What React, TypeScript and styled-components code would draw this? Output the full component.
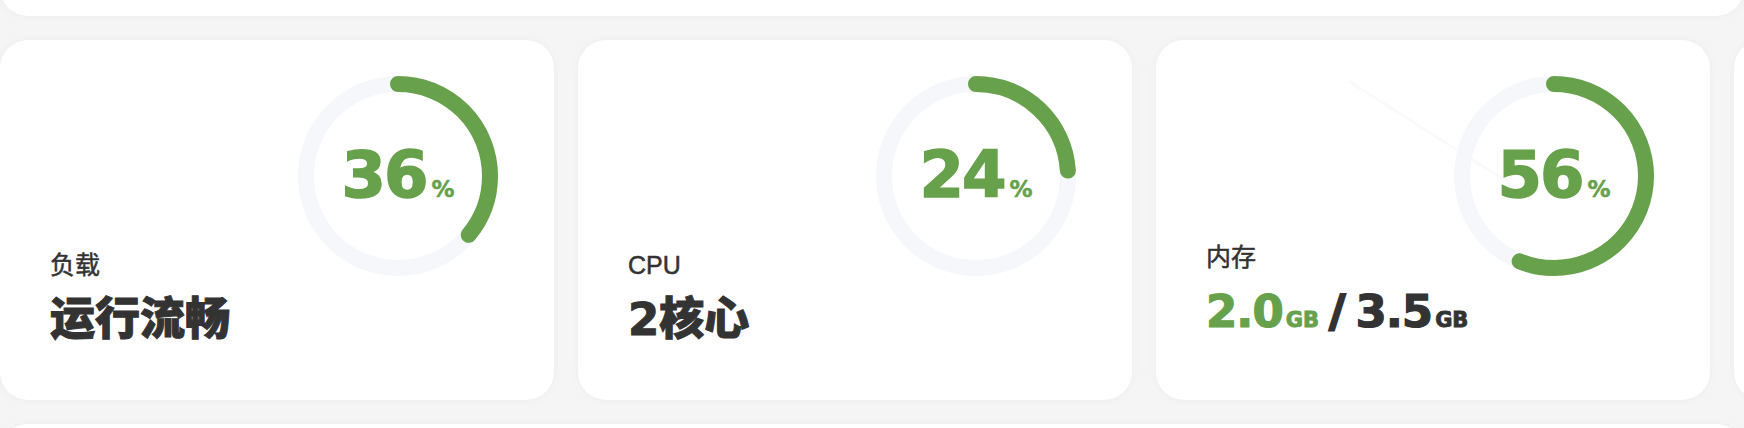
import React from "react";
import styled, {createGlobalStyle} from "styled-components";

const GlobalStyle = createGlobalStyle`
    html, body {
        margin: 0;
        padding: 0;
        background: #f5f5f5;
    }
    body {
        font-family: "Liberation Sans", "Noto Sans CJK SC", sans-serif;
        color: #333;
    }
`;

const GREEN = "#67a14b";
const TRACK = "#f5f7fa";

const StyledPage = styled.div`
    display: flex;
    flex-direction: column;
    gap: 24px;
    width: 1744px;
    height: 428px;
    overflow: hidden;
`;

const StyledPanel = styled.div<{ $top?: boolean }>`
    flex: none;
    height: 116px;
    margin-top: ${p => p.$top ? "-100px" : "0"};
    background-color: #fff;
    border-radius: 28px;
    box-shadow: 0 0 10px rgba(0, 0, 0, 0.04);
`;

const StyledRow = styled.div`
    display: flex;
    gap: 24px;
    flex: none;
`;

const StyledCard = styled.div`
    flex: 0 0 554px;
    height: 360px;
    box-sizing: border-box;
    display: grid;
    grid-template-columns: minmax(0, 1fr) 200px;
    align-items: start;
    padding: 36px 56px 0 50px;
    background-color: #fff;
    border-radius: 28px;
    box-shadow: 0 0 10px rgba(0, 0, 0, 0.04);
`;

const StyledInfo = styled.div`
    align-self: stretch;
    display: flex;
    flex-direction: column;
    justify-content: flex-end;
    padding-bottom: 54px;
    white-space: nowrap;
`;

const StyledLabel = styled.div`
    font-size: 25px;
    line-height: 30px;
    color: #333;
    -webkit-text-stroke: 0.5px #333;
`;

const StyledValue = styled.div`
    margin-top: 14px;
    font-family: "DejaVu Sans", "Noto Sans CJK SC", sans-serif;
    font-size: 45px;
    line-height: 52px;
    font-weight: 900;
    color: #333;
    -webkit-text-stroke: 1px #333;
    display: flex;
    align-items: baseline;
`;

const StyledNum = styled.span<{ $green?: boolean }>`
    color: ${p => p.$green ? GREEN : "#333"};
    -webkit-text-stroke: 1.2px ${p => p.$green ? GREEN : "#333"};
    letter-spacing: -1px;
`;

const StyledUnit = styled.span<{ $green?: boolean }>`
    color: ${p => p.$green ? GREEN : "#333"};
    -webkit-text-stroke: 0.9px ${p => p.$green ? GREEN : "#333"};
    font-size: 21px;
    margin-left: 3px;
`;

const StyledSlash = styled.span`
    margin: 0 10px 0 10px;
    -webkit-text-stroke: 2px #333;
`;

const StyledRing = styled.div`
    width: 200px;
    height: 200px;
    display: grid;
    place-items: center;

    & > * {
        grid-area: 1 / 1;
    }

    svg {
        overflow: visible;
    }
`;

const StyledPercent = styled.div`
    display: flex;
    align-items: baseline;
    font-family: "DejaVu Sans", sans-serif;
    font-weight: 700;
    color: ${GREEN};
    -webkit-text-stroke: 1.5px ${GREEN};
    padding-bottom: 2px;
`;

const StyledBig = styled.span`
    font-size: 64px;
    line-height: 64px;
    letter-spacing: -2px;
`;

const StyledSmall = styled.span`
    font-size: 23px;
    margin-left: 5px;
    -webkit-text-stroke: 0.5px ${GREEN};
`;

const Ring = ({value, trail}: { value: number, trail?: boolean }) => {
    const r = 92;
    const c = 2 * Math.PI * r;
    return (
        <StyledRing>
            <svg width="200" height="200" viewBox="0 0 200 200">
                {trail && <line x1="-104" y1="6" x2="66" y2="114" stroke="#eef1f6" strokeWidth="3" strokeLinecap="round" opacity="0.3"/>}
                <circle cx="100" cy="100" r={r} fill="none" stroke={TRACK} strokeWidth="16"/>
                <circle
                    cx="100" cy="100" r={r} fill="none"
                    stroke={GREEN} strokeWidth="16" strokeLinecap="round"
                    strokeDasharray={`${c * value / 100} ${c}`}
                    transform="rotate(-90 100 100)"
                />
            </svg>
            <StyledPercent>
                <StyledBig>{value}</StyledBig>
                <StyledSmall>%</StyledSmall>
            </StyledPercent>
        </StyledRing>
    );
};

const App = () => {
    return (
        <>
            <GlobalStyle/>
            <StyledPage>
                <StyledPanel $top/>
                <StyledRow>
                    <StyledCard>
                        <StyledInfo>
                            <StyledLabel>负载</StyledLabel>
                            <StyledValue>运行流畅</StyledValue>
                        </StyledInfo>
                        <Ring value={36}/>
                    </StyledCard>
                    <StyledCard>
                        <StyledInfo>
                            <StyledLabel>CPU</StyledLabel>
                            <StyledValue>2核心</StyledValue>
                        </StyledInfo>
                        <Ring value={24}/>
                    </StyledCard>
                    <StyledCard>
                        <StyledInfo>
                            <StyledLabel>内存</StyledLabel>
                            <StyledValue>
                                <StyledNum $green>2.0</StyledNum>
                                <StyledUnit $green>GB</StyledUnit>
                                <StyledSlash>/</StyledSlash>
                                <StyledNum>3.5</StyledNum>
                                <StyledUnit>GB</StyledUnit>
                            </StyledValue>
                        </StyledInfo>
                        <Ring value={56} trail/>
                    </StyledCard>
                    <StyledCard/>
                </StyledRow>
                <StyledPanel/>
            </StyledPage>
        </>
    );
};

export default App;
